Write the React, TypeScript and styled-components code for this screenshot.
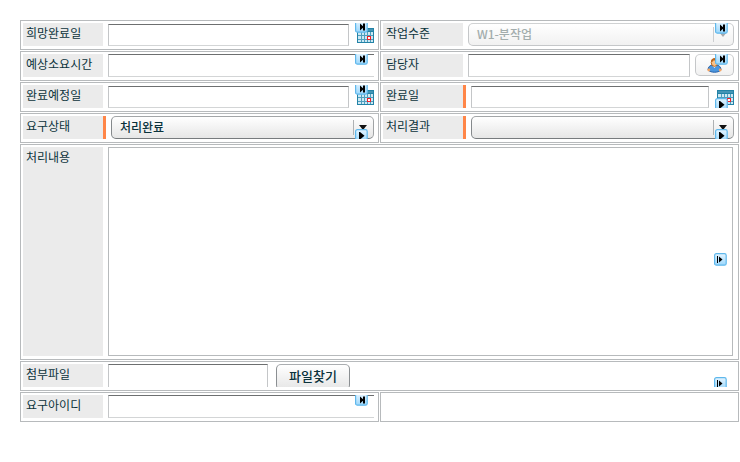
import React from 'react';
import styled, { createGlobalStyle } from 'styled-components';

const Global = createGlobalStyle`
  * { box-sizing: border-box; }
  body { margin: 0; background: #fff; font: 12px/16px "Noto Sans CJK KR", sans-serif; color: #0b333c; }
`;
const Form = styled.main`
  width: 719px;
  margin: 20px 0 0 20px;
  display: grid;
  grid-template-columns: 359px 359px;
  grid-template-rows: 30px 30px 30px 30px 216px 30px 30px;
  gap: 1px;
`;
const Cell = styled.section<{ $wide?: boolean }>`
  grid-column: ${p => (p.$wide ? 'span 2' : 'auto')};
  border: 1px solid #b7babc;
  padding: 2px 4px 3px 2px;
  display: flex;
  min-width: 0;
  min-height: 0;
`;
const Label = styled.label`
  width: 80px;
  flex: none;
  background: #ebebeb;
  padding: 2px 3px;
  white-space: nowrap;
`;
const Required = styled.i`
  width: 3px;
  flex: none;
  background: #ff8648;
`;
const Body = styled.div`
  position: relative;
  flex: 1;
  min-width: 0;
  height: 100%;
  margin-left: 5px;
  overflow: hidden;
  display: flex;
  align-items: flex-start;
`;
const Field = styled.input<{ $w: number; $drop?: boolean; $h?: number }>`
  width: ${p => p.$w}px;
  flex: none;
  height: ${p => p.$h ?? 22}px;
  margin: ${p => (p.$drop ? 1 : 0)}px 0 0;
  padding: 0 4px;
  border: 1px solid #c4c6c8;
  border-top-color: #6d6f70;
  border-bottom-color: #d3d5d6;
  border-radius: 0;
  outline: 0;
  background: #fff;
`;
const Area = styled.textarea`
  width: 625px;
  height: 209px;
  margin: 0;
  border: 1px solid #b7babc;
  resize: none;
  outline: 0;
  background: #fff;
`;
const Button = styled.button<{ $w: number; $h?: number; $ml?: number; $soft?: boolean }>`
  width: ${p => p.$w}px;
  height: ${p => p.$h ?? 23}px;
  margin: 0 0 0 ${p => p.$ml ?? 0}px;
  flex: none;
  padding: 0 0 ${p => (p.$soft ? 0 : 3)}px;
  border: 1px solid ${p => (p.$soft ? '#c5c7c9' : '#8b8f92')};
  border-top-color: ${p => (p.$soft ? '#d0d2d3' : '#aaadb0')};
  border-radius: 5px;
  background: linear-gradient(#fff, ${p => (p.$soft ? '#f1f1f1' : '#e6e6e6')});
  color: #0b333c;
  font: 500 13px/16px "Noto Sans CJK KR", sans-serif;
  display: flex;
  align-items: center;
  justify-content: center;
`;
const Select = styled(Button)<{ $disabled?: boolean }>`
  justify-content: space-between;
  font-size: 12px;
  padding: 0 4px 2px 8px;
  color: ${p => (p.$disabled ? '#a3adad' : '#0b333c')};
  border-color: ${p => (p.$disabled ? '#d0d2d3 #c5c7c9 #c5c7c9' : '#a3a6a8 #a0a3a5 #777b7e #85898c')};
  background: ${p => (p.$disabled ? 'linear-gradient(#fff, #f1f1f1)' : 'linear-gradient(#fff, #e6e6e6)')};
`;
const Arrow = styled.span<{ $disabled?: boolean }>`
  width: 16px;
  height: 15px;
  margin-top: 2px;
  border-left: 1px solid ${p => (p.$disabled ? '#ccced0' : '#aeb1b3')};
  display: flex;
  align-items: center;
  padding-left: 5px;
  &::after {
    content: '';
    border: 4px solid transparent;
    border-top: 5px solid ${p => (p.$disabled ? '#a5a9ac' : '#111')};
    border-bottom: 0;
  }
`;
const Pin = styled.span<{ $x: number; $y: number }>`
  position: absolute;
  left: ${p => p.$x}px;
  top: ${p => p.$y}px;
  line-height: 0;
`;
const CalendarWrap = styled.span<{ $ml: number }>`
  margin: 5px 0 0 ${p => p.$ml}px;
  line-height: 0;
  flex: none;
`;

type BadgeKind = 'end' | 'play' | 'step';

const Badge = ({ x, y, kind }: { x: number; y: number; kind: BadgeKind }) => (
  <Pin $x={x} $y={y}>
    <svg width="13" height="13" viewBox="0 0 13 13">
      <defs>
        <linearGradient id="badge" x2="0" y2="1">
          <stop stopColor="#e6f5ff" />
          <stop offset="1" stopColor="#9bd7fc" />
        </linearGradient>
      </defs>
      <rect x=".6" y=".6" width="11.6" height="11.6" rx="1.8" fill="url(#badge)" stroke="#5fb8ec" strokeWidth="1.2" />
      {kind === 'end' && <path d="M5 3.5l3 2.7V3.5h2v7H8V7.8L5 10.5z" fill="#000" />}
      {kind === 'play' && <path d="M4 3h1l4.5 3.7L5 10.5H4z" fill="#000" />}
      {kind === 'step' && <path d="M3 3h1v7H3zM5 3.5l3.5 3-3.5 3z" fill="#000" />}
    </svg>
  </Pin>
);

const Calendar = ({ ml = 8 }: { ml?: number }) => (
  <CalendarWrap $ml={ml}>
    <svg width="17" height="15" viewBox="0 0 17 15" shapeRendering="crispEdges">
      <path d="M0 0h17v15H0z" fill="#2383a7" />
      <path d="M1 1h15v2H1z" fill="#4394b5" />
      <path d="M1 4h15v10H1z" fill="#cce8f4" />
      <path d="M4 4h1v10H4zM7 4h1v10H7zM10 4h1v10h-1zM13 4h1v10h-1zM1 7h15v1H1zM1 11h15v1H1z" fill="#509fbe" />
      <path d="M10 8h4v4h-4z" fill="#f01e28" />
      <path d="M11 9h2v2h-2z" fill="#fff" />
    </svg>
  </CalendarWrap>
);

const Person = () => (
  <svg width="15" height="15" viewBox="0 0 15 15">
    <path d="M1 12c0-3 2-5 5-5h3c3 0 5 2 5 5-3 3-10 3-13 0z" fill="#4b97df" stroke="#245fa8" />
    <path d="M5 7l2.5 3L10 7z" fill="#fff" />
    <circle cx="1.8" cy="12" r="1.4" fill="#f2a565" />
    <circle cx="13.2" cy="12" r="1.4" fill="#f2a565" />
    <ellipse cx="7.5" cy="4.5" rx="3.3" ry="3.9" fill="#f8c28a" stroke="#b66a22" />
    <path d="M4 4c0-5 7-5 7 0-2 0-3-1-4-2-1 1-1 2-3 2z" fill="#b8651d" />
  </svg>
);

export default function App() {
  return (
    <>
      <Global />
      <Form>
        <Cell>
          <Label>희망완료일</Label>
          <Body><Field $w={241} $drop /><Calendar /><Badge x={247} y={-3} kind="end" /></Body>
        </Cell>
        <Cell>
          <Label>작업수준</Label>
          <Body>
            <Select $w={266} $disabled>W1-분작업<Arrow $disabled /></Select>
            <Badge x={247} y={-2} kind="end" />
          </Body>
        </Cell>
        <Cell>
          <Label>예상소요시간</Label>
          <Body><Field $w={280} $h={23} /><Badge x={247} y={-2} kind="end" /></Body>
        </Cell>
        <Cell>
          <Label>담당자</Label>
          <Body>
            <Field $w={222} $h={23} />
            <Button $w={39} $h={22} $ml={5} $soft><Person /></Button>
            <Badge x={247} y={-2} kind="end" />
          </Body>
        </Cell>
        <Cell>
          <Label>완료예정일</Label>
          <Body><Field $w={241} $drop /><Calendar /><Badge x={247} y={-3} kind="end" /></Body>
        </Cell>
        <Cell>
          <Label>완료일</Label><Required />
          <Body><Field $w={238} $drop /><Calendar /><Badge x={244} y={13} kind="play" /></Body>
        </Cell>
        <Cell>
          <Label>요구상태</Label><Required />
          <Body>
            <Select $w={263}>처리완료<Arrow /></Select>
            <Badge x={244} y={13} kind="play" />
          </Body>
        </Cell>
        <Cell>
          <Label>처리결과</Label><Required />
          <Body>
            <Select $w={263}><span /><Arrow /></Select>
            <Badge x={244} y={13} kind="play" />
          </Body>
        </Cell>
        <Cell $wide>
          <Label>처리내용</Label>
          <Body><Area /><Badge x={606} y={106} kind="step" /></Body>
        </Cell>
        <Cell $wide>
          <Label>첨부파일</Label>
          <Body>
            <Field $w={160} $h={26} />
            <Button $w={74} $h={26} $ml={8}>파일찾기</Button>
            <Badge x={606} y={13} kind="step" />
          </Body>
        </Cell>
        <Cell>
          <Label>요구아이디</Label>
          <Body><Field $w={280} $h={23} /><Badge x={247} y={-2} kind="end" /></Body>
        </Cell>
        <Cell />
      </Form>
    </>
  );
}
